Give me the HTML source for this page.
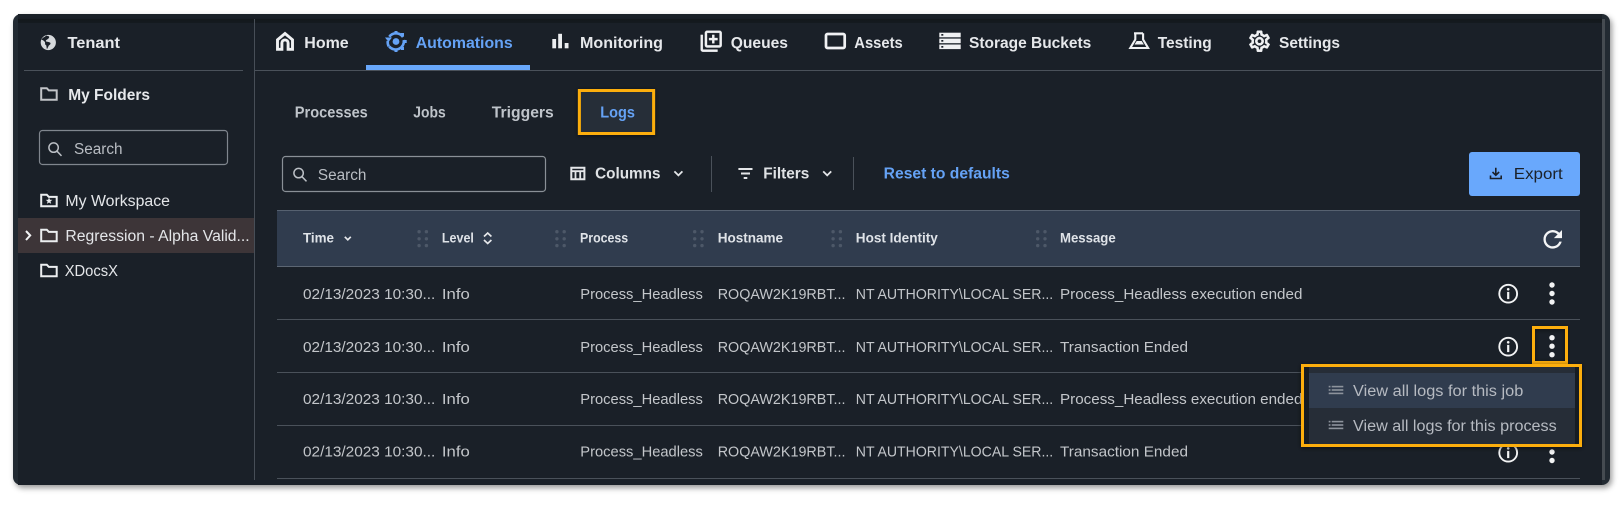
<!DOCTYPE html>
<html lang="en">
<head>
<meta charset="utf-8">
<title>Logs</title>
<style>
html,body{margin:0;padding:0;background:#fff;width:1624px;height:506px;overflow:hidden}
svg{display:block}
text{font-family:"Liberation Sans",sans-serif;white-space:pre}
.nav{font-size:16px;font-weight:700;fill:#e6e8eb}
.tab{font-size:15.5px;font-weight:700;fill:#bfc4ca}
.tree{font-size:15.5px;fill:#e4e6e9}
.ph{font-size:15.5px;fill:#b9bdc3}
.tb{font-size:15.5px;font-weight:700;fill:#dfe2e5}
.blue{fill:#65a2f5}
.th{font-size:14px;font-weight:700;fill:#dfe3e8}
.td{font-size:14.5px;fill:#c3c6ca}
.mi{font-size:15.5px;fill:#b6bac1}
</style>
</head>
<body>
<svg width="1624" height="506" viewBox="0 0 1624 506" xmlns="http://www.w3.org/2000/svg">
<defs>
<filter id="sh" x="-5%" y="-5%" width="110%" height="115%"><feDropShadow dx="2" dy="3" stdDeviation="3" flood-color="#000" flood-opacity=".4"/></filter>
<filter id="sh2" x="-10%" y="-20%" width="120%" height="140%"><feDropShadow dx="0" dy="1" stdDeviation="2.5" flood-color="#000" flood-opacity=".55"/></filter>
<linearGradient id="top" x1="0" y1="0" x2="0" y2="1"><stop offset="0" stop-color="#1b2229"/><stop offset=".5" stop-color="#1a2027"/><stop offset=".6" stop-color="#13181c"/><stop offset="1" stop-color="#141a1f"/></linearGradient>
<g id="dots" fill="#4d5868"><circle cx="1.7" cy="1.7" r="1.7"/><circle cx="9" cy="1.7" r="1.7"/><circle cx="1.7" cy="8.8" r="1.7"/><circle cx="9" cy="8.8" r="1.7"/><circle cx="1.7" cy="15.6" r="1.7"/><circle cx="9" cy="15.6" r="1.7"/></g>
<g id="info"><circle cx="0" cy="0" r="8.9" fill="none" stroke="#f2f3f4" stroke-width="1.9"/><circle cx="0" cy="-4.4" r="1.3" fill="#f2f3f4"/><rect x="-1.1" y="-1.8" width="2.2" height="7.2" fill="#f2f3f4"/></g>
<g id="kebab" fill="#f2f3f4"><circle cx="0" cy="0" r="2.7"/><circle cx="0" cy="8.5" r="2.7"/><circle cx="0" cy="17" r="2.7"/></g>
<g id="list" fill="#8d939c"><rect x="0" y="0" width="1.8" height="1.6"/><rect x="3" y="0" width="11.6" height="1.6"/><rect x="0" y="3.4" width="1.8" height="1.6"/><rect x="3" y="3.4" width="11.6" height="1.6"/><rect x="0" y="6.8" width="14.6" height="1.6"/></g>
<path id="mag" d="M5.600 .9a4.700 4.700 0 1 0 0 9.400 4.700 4.700 0 0 0 0-9.400zM9 9.200l4.500 4.700" fill="none" stroke="#bcc0c6" stroke-width="1.500"/>
<path id="chev" d="M0 0l4 4 4-4" fill="none" stroke="#e4e6e9" stroke-width="1.800"/>
<path id="fold" d="M1.200 1.200h5.600l2 2.200h7.900v9.400H1.200z" fill="none" stroke="#eceef0" stroke-width="2"/>
</defs>

<!-- frame -->
<rect x="13" y="14" width="1597" height="471" rx="8" fill="#222a32" filter="url(#sh)"/>
<rect x="18" y="14" width="1584" height="9" fill="url(#top)"/>
<rect x="18" y="23" width="1584" height="462" fill="#1a2028"/>
<rect x="1602" y="19" width="3" height="461" fill="#454b51"/>

<!-- dividers -->
<rect x="254" y="19" width="1" height="461" fill="#474e57"/>
<rect x="24" y="70" width="219" height="1" fill="#4a515a"/>
<rect x="255" y="70" width="1347" height="1" fill="#4a515a"/>

<!-- sidebar -->
<circle cx="48.300" cy="42.500" r="7.600" fill="#d6d9dc"/>
<path d="M46 35.500c-.6 1.600-3.300 1.600-4.600 4.300 1.600.1 2.600 1.200 3.600 2.300.2 1.200-.3 2.500 1.200 3.200.4 1.300.3 2.600.8 4l1.800-3.800c1-.7 2.200-1.600 1.500-2.800-1.700-1-3.200-.9-4.300-1.200-.6-1.300.8-1.700 1.700-2.400.8-.6 1.800-1.200 1.300-2.700z" fill="#1a2028"/>
<text x="67.500" y="48.200" class="nav" textLength="52.500" lengthAdjust="spacingAndGlyphs">Tenant</text>
<use href="#fold" x="40" y="87" opacity=".8"/>
<text x="68.200" y="99.800" class="nav" textLength="81.800" lengthAdjust="spacingAndGlyphs">My Folders</text>
<rect x="39.500" y="130.500" width="188" height="34" rx="3" fill="none" stroke="#80868e" stroke-width="1.200"/>
<use href="#mag" x="48" y="142"/>
<text x="74" y="154" class="ph" textLength="48.600" lengthAdjust="spacingAndGlyphs">Search</text>

<use href="#fold" x="40" y="193.500"/>
<path d="M49 197.500l1 2.200 2.300.2-1.800 1.500.6 2.300-2.100-1.200-2 1.200.6-2.300-1.800-1.500 2.300-.2z" fill="#eceef0"/>
<text x="65.400" y="206" class="tree" textLength="104.600" lengthAdjust="spacingAndGlyphs">My Workspace</text>
<rect x="18" y="218" width="236" height="35" fill="#3d3538"/>
<path d="M26 231l4.200 4.400-4.200 4.600" fill="none" stroke="#f2f3f4" stroke-width="2"/>
<use href="#fold" x="40" y="228.500"/>
<text x="65.400" y="241" class="tree" textLength="184.300" lengthAdjust="spacingAndGlyphs">Regression - Alpha Valid...</text>
<use href="#fold" x="40" y="263.500"/>
<text x="64.700" y="276" class="tree" textLength="53.300" lengthAdjust="spacingAndGlyphs">XDocsX</text>

<!-- top nav -->
<path d="M277.500 49.300V39.800l7.500-6.300 7.500 6.300v9.500h-4.400v-6.300a3.100 3.100 0 0 0-6.200 0v6.300z" fill="none" stroke="#f0f1f3" stroke-width="2.900"/>
<text x="304.300" y="48.200" class="nav" textLength="44.400" lengthAdjust="spacingAndGlyphs">Home</text>

<g fill="#65a2f5" stroke="none">
<circle cx="396" cy="41.500" r="3.400"/>
<path d="M389.300 36.800a8.300 8.300 0 0 1 13.700 .3" fill="none" stroke="#65a2f5" stroke-width="2.600"/>
<path d="M403.800 40a8.300 8.300 0 0 1-14.600 6.500" fill="none" stroke="#65a2f5" stroke-width="2.600"/>
<path d="M388.800 46.500a8.300 8.300 0 0 1-1-5.500" fill="none" stroke="#65a2f5" stroke-width="2.600"/>
<path d="M385 37.500h7l-3.500 4.500z"/>
<rect x="394.500" y="31" width="3" height="3"/><rect x="394.500" y="49" width="3" height="3"/><rect x="403.700" y="40" width="3" height="3"/>
<rect x="401" y="33" width="3" height="3"/><rect x="401" y="47" width="3" height="3"/>
</g>
<text x="415.700" y="48.200" class="nav blue" textLength="97" lengthAdjust="spacingAndGlyphs">Automations</text>
<rect x="366" y="65" width="164" height="5" fill="#68a7fb"/>

<g fill="#eceef0"><rect x="552.300" y="39" width="3.800" height="9.300"/><rect x="558.200" y="33.800" width="3.800" height="14.500"/><rect x="564.700" y="43" width="3.800" height="5.300"/></g>
<text x="580" y="48.200" class="nav" textLength="83" lengthAdjust="spacingAndGlyphs">Monitoring</text>

<path transform="translate(698.600 28.600) scale(1.050)" fill="#f0f1f3" stroke="#f0f1f3" stroke-width=".35" d="M4 6H2v14c0 1.100.9 2 2 2h14v-2H4V6zm16-4H8c-1.100 0-2 .9-2 2v12c0 1.100.9 2 2 2h12c1.100 0 2-.9 2-2V4c0-1.100-.9-2-2-2zm0 14H8V4h12v12zm-7-2h2v-3h3V9h-3V6h-2v3h-3v2h3z"/>
<text x="730.700" y="48.200" class="nav" textLength="57.300" lengthAdjust="spacingAndGlyphs">Queues</text>

<rect x="826" y="34" width="18.700" height="14" rx="1.500" fill="none" stroke="#f0f1f3" stroke-width="2.700"/>
<text x="854.300" y="48.200" class="nav" textLength="48.400" lengthAdjust="spacingAndGlyphs">Assets</text>

<g fill="#f0f1f3"><rect x="939.300" y="32.700" width="21.400" height="4.600"/><rect x="939.300" y="38.600" width="21.400" height="4.600"/><rect x="939.300" y="44.500" width="21.400" height="4.600"/></g>
<g fill="#1a2028"><rect x="941.300" y="34" width="2" height="1.700"/><rect x="941.300" y="40" width="2" height="1.700"/><rect x="941.300" y="46" width="2" height="1.700"/></g>
<text x="969" y="48.200" class="nav" textLength="122.300" lengthAdjust="spacingAndGlyphs">Storage Buckets</text>

<path d="M1134 33.300h9M1135.300 33.300v6.200l-5 8.500h17.800l-5-8.500v-6.200" fill="none" stroke="#f0f1f3" stroke-width="2.100"/>
<path d="M1134.500 44.500l2.200-3.500h5l2.200 3.500z" fill="#f0f1f3"/>
<text x="1157.700" y="48.200" class="nav" textLength="54" lengthAdjust="spacingAndGlyphs">Testing</text>

<path transform="translate(1246.900 28.600) scale(1.050)" fill="#f0f1f3" stroke="#f0f1f3" stroke-width=".45" d="M19.430 12.980c.04-.32.07-.64.07-.98 0-.34-.03-.66-.07-.98l2.110-1.650c.19-.15.24-.42.12-.64l-2-3.460c-.09-.16-.26-.25-.44-.25-.06 0-.12.01-.17.03l-2.490 1c-.52-.4-1.080-.73-1.690-.98l-.38-2.650C14.460 2.180 14.250 2 14 2h-4c-.25 0-.46.18-.49.42l-.38 2.650c-.61.25-1.170.59-1.690.98l-2.490-1c-.06-.02-.12-.03-.18-.03-.17 0-.34.09-.43.25l-2 3.460c-.13.22-.07.49.12.64l2.110 1.650c-.04.32-.07.65-.07.98 0 .33.03.66.07.98l-2.110 1.650c-.19.15-.24.42-.12.64l2 3.460c.09.16.26.25.44.25.06 0 .12-.01.17-.03l2.490-1c.52.4 1.080.73 1.690.98l.38 2.650c.03.24.24.42.49.42h4c.25 0 .46-.18.49-.42l.38-2.650c.61-.25 1.170-.59 1.690-.98l2.490 1c.06.02.12.03.18.03.17 0 .34-.09.43-.25l2-3.460c.12-.22.07-.49-.12-.64l-2.110-1.650zm-1.980-1.710c.04.31.05.52.05.73 0 .21-.02.43-.05.73l-.14 1.130.89.7 1.080.84-.7 1.210-1.270-.51-1.040-.42-.9.68c-.43.32-.84.56-1.250.73l-1.060.43-.16 1.130-.2 1.350h-1.400l-.19-1.350-.16-1.130-1.060-.43c-.43-.18-.83-.41-1.230-.71l-.91-.7-1.060.43-1.270.51-.7-1.210 1.080-.84.89-.7-.14-1.130c-.03-.31-.05-.54-.05-.74s.02-.43.05-.73l.14-1.130-.89-.7-1.080-.84.7-1.210 1.270.51 1.040.42.9-.68c.43-.32.84-.56 1.250-.73l1.060-.43.16-1.130.2-1.350h1.390l.19 1.350.16 1.130 1.060.43c.43.18.83.41 1.230.71l.91.7 1.060-.43 1.270-.51.7 1.210-1.070.85-.89.7.14 1.130zM12 8c-2.210 0-4 1.790-4 4s1.790 4 4 4 4-1.790 4-4-1.790-4-4-4zm0 6c-1.100 0-2-.9-2-2s.9-2 2-2 2 .9 2 2-.9 2-2 2z"/>
<text x="1279" y="48.200" class="nav" textLength="61" lengthAdjust="spacingAndGlyphs">Settings</text>

<!-- tabs -->
<text x="294.800" y="117.700" class="tab" textLength="73" lengthAdjust="spacingAndGlyphs">Processes</text>
<text x="413.300" y="117.700" class="tab" textLength="32.400" lengthAdjust="spacingAndGlyphs">Jobs</text>
<text x="491.800" y="117.700" class="tab" textLength="62" lengthAdjust="spacingAndGlyphs">Triggers</text>
<rect x="579.400" y="90.500" width="74.200" height="43" fill="#272e39" stroke="#fcae08" stroke-width="3" filter="url(#sh2)"/>
<text x="600.300" y="117.700" class="tab blue" textLength="34.700" lengthAdjust="spacingAndGlyphs">Logs</text>

<!-- toolbar -->
<rect x="282.500" y="156.500" width="263" height="35" rx="3" fill="none" stroke="#8a9097" stroke-width="1.200"/>
<use href="#mag" x="293" y="167.500"/>
<text x="317.900" y="180" class="ph" textLength="48.500" lengthAdjust="spacingAndGlyphs">Search</text>

<path d="M571.300 167.700h13.100v11.600h-13.100z" fill="none" stroke="#e4e6e9" stroke-width="2"/>
<path d="M571 171.200h14M575.500 171v8M580.200 171v8" fill="none" stroke="#e4e6e9" stroke-width="1.800"/>
<text x="595.100" y="178.700" class="tb" textLength="65.400" lengthAdjust="spacingAndGlyphs">Columns</text>
<use href="#chev" x="674.400" y="171.400"/>
<rect x="711" y="156" width="1" height="36" fill="#4a515a"/>
<path d="M738.400 169h14.100M741 173.500h9M743.700 178h3.600" stroke="#e4e6e9" stroke-width="2" fill="none"/>
<text x="763.200" y="178.700" class="tb" textLength="46.100" lengthAdjust="spacingAndGlyphs">Filters</text>
<use href="#chev" x="823.200" y="171.400"/>
<rect x="853" y="157" width="1" height="33" fill="#4a515a"/>
<text x="883.700" y="178.700" class="tb blue" textLength="126.100" lengthAdjust="spacingAndGlyphs">Reset to defaults</text>

<rect x="1469" y="152" width="111" height="44" rx="3" fill="#69a8fc"/>
<path d="M1495.800 167.700v7.300M1492.500 172l3.300 3.300 3.300-3.300M1490.500 175.500v3h10.700v-3" fill="none" stroke="#1b2129" stroke-width="1.600"/>
<text x="1513.800" y="179" font-size="15.500" fill="#1b2129" textLength="48.900" lengthAdjust="spacingAndGlyphs">Export</text>

<!-- table header -->
<rect x="277" y="210" width="1303" height="57" fill="#303c4e"/>
<rect x="277" y="210" width="1303" height="1" fill="#566170"/>
<rect x="277" y="266" width="1303" height="1" fill="#5c6673"/>
<text x="303" y="242.300" class="th" textLength="31" lengthAdjust="spacingAndGlyphs">Time</text>
<path d="M344.800 236.800l3 3 3-3" fill="none" stroke="#e6e8eb" stroke-width="1.700"/>
<use href="#dots" x="417.400" y="230"/>
<text x="441.900" y="242.300" class="th" textLength="32" lengthAdjust="spacingAndGlyphs">Level</text>
<path d="M484 236.500l3.700-3.500 3.700 3.500M484 240l3.700 3.500 3.700-3.500" fill="none" stroke="#e6e8eb" stroke-width="1.700"/>
<use href="#dots" x="555.200" y="230"/>
<text x="580" y="242.300" class="th" textLength="48.200" lengthAdjust="spacingAndGlyphs">Process</text>
<use href="#dots" x="693" y="230"/>
<text x="717.700" y="242.300" class="th" textLength="65.400" lengthAdjust="spacingAndGlyphs">Hostname</text>
<use href="#dots" x="831.400" y="230"/>
<text x="855.800" y="242.300" class="th" textLength="82" lengthAdjust="spacingAndGlyphs">Host Identity</text>
<use href="#dots" x="1036" y="230"/>
<text x="1060" y="242.300" class="th" textLength="55.700" lengthAdjust="spacingAndGlyphs">Message</text>
<path transform="translate(1538.800 225.400) scale(1.160)" fill="#f4f5f6" d="M17.650 6.350C16.200 4.900 14.210 4 12 4c-4.420 0-7.990 3.580-7.990 8s3.570 8 7.990 8c3.730 0 6.840-2.550 7.730-6h-2.080c-.82 2.330-3.040 4-5.650 4-3.310 0-6-2.690-6-6s2.690-6 6-6c1.660 0 3.140.69 4.220 1.780L13 11h7V4l-2.350 2.350z"/>

<!-- rows -->
<g>
<text x="303" y="299" class="td" textLength="132.300" lengthAdjust="spacingAndGlyphs">02/13/2023 10:30...</text>
<text x="441.900" y="299" class="td" textLength="27.900" lengthAdjust="spacingAndGlyphs">Info</text>
<text x="580.300" y="299" class="td" textLength="122.600" lengthAdjust="spacingAndGlyphs">Process_Headless</text>
<text x="717.700" y="299" class="td" textLength="127.800" lengthAdjust="spacingAndGlyphs">ROQAW2K19RBT...</text>
<text x="855.800" y="299" class="td" textLength="197.400" lengthAdjust="spacingAndGlyphs">NT AUTHORITY\LOCAL SER...</text>
<text x="1060" y="299" class="td" textLength="242.400" lengthAdjust="spacingAndGlyphs">Process_Headless execution ended</text>
<use href="#info" x="1508.200" y="293.700"/>
<use href="#kebab" x="1552" y="285"/>
<rect x="277" y="319" width="1303" height="1" fill="#4a515a"/>

<text x="303" y="352" class="td" textLength="132.300" lengthAdjust="spacingAndGlyphs">02/13/2023 10:30...</text>
<text x="441.900" y="352" class="td" textLength="27.900" lengthAdjust="spacingAndGlyphs">Info</text>
<text x="580.300" y="352" class="td" textLength="122.600" lengthAdjust="spacingAndGlyphs">Process_Headless</text>
<text x="717.700" y="352" class="td" textLength="127.800" lengthAdjust="spacingAndGlyphs">ROQAW2K19RBT...</text>
<text x="855.800" y="352" class="td" textLength="197.400" lengthAdjust="spacingAndGlyphs">NT AUTHORITY\LOCAL SER...</text>
<text x="1060" y="352" class="td" textLength="128" lengthAdjust="spacingAndGlyphs">Transaction Ended</text>
<use href="#info" x="1508.200" y="346.700"/>
<use href="#kebab" x="1552" y="337.700"/>
<rect x="277" y="372" width="1303" height="1" fill="#4a515a"/>

<text x="303" y="404" class="td" textLength="132.300" lengthAdjust="spacingAndGlyphs">02/13/2023 10:30...</text>
<text x="441.900" y="404" class="td" textLength="27.900" lengthAdjust="spacingAndGlyphs">Info</text>
<text x="580.300" y="404" class="td" textLength="122.600" lengthAdjust="spacingAndGlyphs">Process_Headless</text>
<text x="717.700" y="404" class="td" textLength="127.800" lengthAdjust="spacingAndGlyphs">ROQAW2K19RBT...</text>
<text x="855.800" y="404" class="td" textLength="197.400" lengthAdjust="spacingAndGlyphs">NT AUTHORITY\LOCAL SER...</text>
<text x="1060" y="404" class="td" textLength="242.400" lengthAdjust="spacingAndGlyphs">Process_Headless execution ended</text>
<rect x="277" y="425" width="1303" height="1" fill="#4a515a"/>

<text x="303" y="456.700" class="td" textLength="132.300" lengthAdjust="spacingAndGlyphs">02/13/2023 10:30...</text>
<text x="441.900" y="456.700" class="td" textLength="27.900" lengthAdjust="spacingAndGlyphs">Info</text>
<text x="580.300" y="456.700" class="td" textLength="122.600" lengthAdjust="spacingAndGlyphs">Process_Headless</text>
<text x="717.700" y="456.700" class="td" textLength="127.800" lengthAdjust="spacingAndGlyphs">ROQAW2K19RBT...</text>
<text x="855.800" y="456.700" class="td" textLength="197.400" lengthAdjust="spacingAndGlyphs">NT AUTHORITY\LOCAL SER...</text>
<text x="1060" y="456.700" class="td" textLength="128" lengthAdjust="spacingAndGlyphs">Transaction Ended</text>
<use href="#info" x="1508.200" y="452.700"/>
<use href="#kebab" x="1552" y="443.500"/>
<rect x="277" y="478" width="1303" height="1" fill="#4a515a"/>
</g>

<!-- small highlight -->
<rect x="1533.500" y="327.500" width="33" height="35" fill="none" stroke="#fcae08" stroke-width="3" filter="url(#sh2)"/>

<!-- menu -->
<rect x="1302.500" y="365.500" width="278" height="80" fill="#171c22" stroke="#fcae08" stroke-width="3" filter="url(#sh2)"/>
<rect x="1309" y="367" width="266" height="77" fill="#262d37"/>
<rect x="1309" y="373" width="266" height="35" fill="#303c4e"/>
<use href="#list" x="1328.700" y="385.800"/>
<text x="1353" y="396" class="mi" textLength="170.300" lengthAdjust="spacingAndGlyphs">View all logs for this job</text>
<use href="#list" x="1328.700" y="420.800"/>
<text x="1353" y="431" class="mi" textLength="203.700" lengthAdjust="spacingAndGlyphs">View all logs for this process</text>
</svg>
</body>
</html>
